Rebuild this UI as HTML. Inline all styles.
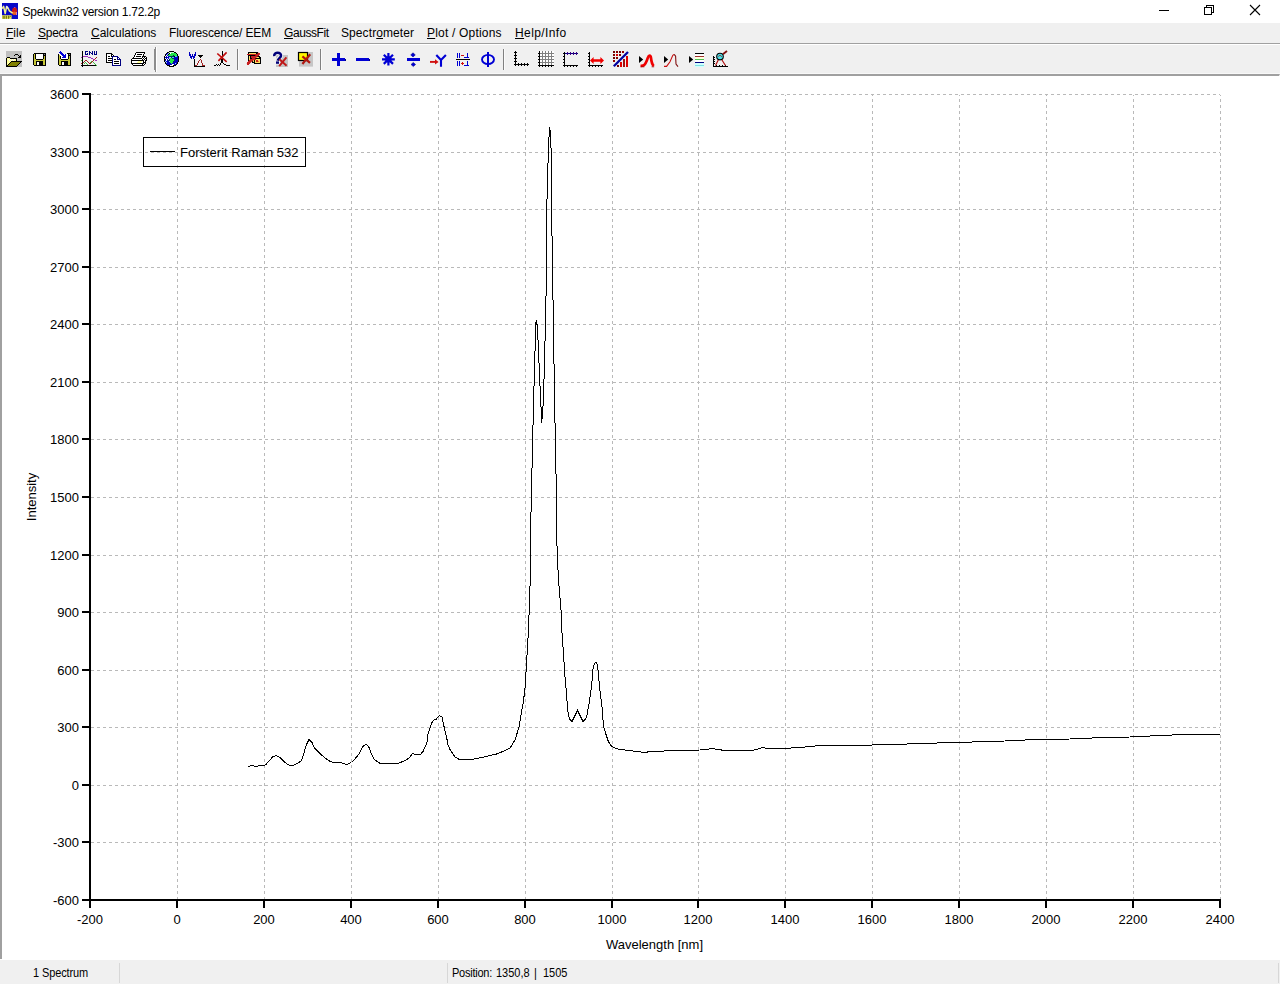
<!DOCTYPE html>
<html lang="en"><head><meta charset="utf-8"><title>Spekwin32 version 1.72.2p</title>
<style>
html,body{margin:0;padding:0;}
body{width:1280px;height:984px;overflow:hidden;background:#fff;position:relative;font-family:"Liberation Sans",Arial,sans-serif;color:#000;}
.titlebar{position:absolute;left:0;top:0;width:1280px;height:23px;background:#fff;}
.title{position:absolute;left:22.6px;top:5px;font-size:12px;line-height:15px;white-space:nowrap;letter-spacing:-0.27px;}
.menubar{position:absolute;left:0;top:23px;width:1280px;height:20px;background:#f0f0f0;}
.menubar span{position:absolute;top:3px;font-size:12px;line-height:15px;white-space:nowrap;}
.menubar u{text-decoration:underline;text-underline-offset:1px;}
.line1{position:absolute;left:0;top:43px;width:1280px;height:1px;background:#a0a0a0;}
.line2{position:absolute;left:0;top:44px;width:1280px;height:1px;background:#fff;}
.toolbar{position:absolute;left:0;top:45px;width:1280px;height:29px;background:#f0f0f0;box-sizing:border-box;border-bottom:1px solid #f8f8f8;}
.sep{position:absolute;top:6px;width:1px;height:20px;background:#a0a0a0;border-right:1px solid #fff;}
.ic{position:absolute;top:6px;width:16px;height:16px;}
.panel{position:absolute;left:0;top:74px;width:1280px;height:885px;background:#fff;border-top:2px solid #a0a0a0;border-left:2px solid #a0a0a0;border-right:1px solid #fff;box-sizing:border-box;}
.plot{position:absolute;left:0;top:75px;}
.status{position:absolute;left:0;top:960px;width:1280px;height:24px;background:#f0f0f0;font-size:11px;}
.status span{position:absolute;top:7px;line-height:13px;white-space:pre;transform:scaleY(1.09);transform-origin:0 10px;}
.status i{position:absolute;top:3px;width:1px;height:20px;background:#d7d7d7;}
.wc{position:absolute;top:0;}
</style></head><body>
<div class="titlebar">
<svg style="position:absolute;left:2px;top:3px" width="16" height="16" viewBox="0 0 16 16"><rect width="16" height="16" fill="#0808c8"/>
<rect x="0" y="12.2" width="9.6" height="3.8" fill="#e8e860"/><path d="M1.2 12.8v3M2.8 12.8v3M4.6 12.8v3M6.6 12.8v3" stroke="#606000" stroke-width="0.9"/><path d="M7.2 14.2l1.8-1.2" stroke="#707010" stroke-width="0.9"/>
<ellipse cx="12.6" cy="8.2" rx="2.6" ry="3.8" fill="#c81818"/><ellipse cx="12.4" cy="10.2" rx="2" ry="1.8" fill="#e86020"/><rect x="14" y="9" width="1" height="3" fill="#e080a0"/><rect x="12" y="4" width="1.4" height="1" fill="#c040a0"/>
<path d="M0.2 5.6L1.6 3.4 3.2 10.6 4.6 3.6 6 5.2 7.4 7.8 10.6 10.2" stroke="#f4f490" stroke-width="1.5" fill="none" stroke-linejoin="round"/>
<path d="M4.6 3.6L6 5.2" stroke="#e8e8ff" stroke-width="1.5"/></svg>
<div class="title">Spekwin32 version 1.72.2p</div>
<svg class="wc" style="left:1140px" width="140" height="23" viewBox="0 0 140 23" shape-rendering="crispEdges"><g stroke="#000" stroke-width="1" fill="none">
<line x1="19" y1="10.5" x2="29" y2="10.5"/>
<rect x="64.5" y="7.5" width="7" height="7"/><path d="M66.5 7.5v-2h7v7h-2"/>
</g><g stroke="#000" stroke-width="1.1" fill="none" shape-rendering="auto"><path d="M110 5l10 10M120 5l-10 10"/></g></svg>
</div>
<div class="menubar">
<span style="left:6px"><u>F</u>ile</span>
<span style="left:38px;letter-spacing:-0.25px"><u>S</u>pectra</span>
<span style="left:91px"><u>C</u>alculations</span>
<span style="left:169px;letter-spacing:-0.16px">Fluorescence/ EEM</span>
<span style="left:284px;letter-spacing:-0.43px"><u>G</u>aussFit</span>
<span style="left:341px;letter-spacing:0.09px">Spectr<u>o</u>meter</span>
<span style="left:427px;letter-spacing:0.19px"><u>P</u>lot / Options</span>
<span style="left:515px;letter-spacing:0.4px"><u>H</u>elp/Info</span>
</div>
<div class="line1"></div><div class="line2"></div>
<div class="toolbar">
<svg style="position:absolute;left:0;top:0" width="1280" height="29" viewBox="0 45 1280 29"><g shape-rendering="crispEdges"><rect x="154" y="49" width="1" height="21" fill="#8c8c8c"/><rect x="155" y="47" width="1" height="25" fill="#8c8c8c"/><rect x="156" y="47" width="1" height="25" fill="#ffffff"/><rect x="237" y="49" width="1" height="21" fill="#808080"/><rect x="238" y="49" width="1" height="21" fill="#fafafa"/><rect x="320" y="49" width="1" height="21" fill="#808080"/><rect x="321" y="49" width="1" height="21" fill="#fafafa"/><rect x="503" y="49" width="1" height="21" fill="#808080"/><rect x="504" y="49" width="1" height="21" fill="#fafafa"/></g><g shape-rendering="crispEdges"><rect x="6" y="51" width="16" height="1" fill="#c0c0c0"/><rect x="6" y="52" width="16" height="1" fill="#c0c0c0"/><rect x="6" y="53" width="16" height="1" fill="#c0c0c0"/><rect x="6" y="54" width="9" height="1" fill="#c0c0c0"/><rect x="15" y="54" width="3" height="1" fill="#000000"/><rect x="18" y="54" width="4" height="1" fill="#c0c0c0"/><rect x="6" y="55" width="8" height="1" fill="#c0c0c0"/><rect x="14" y="55" width="1" height="1" fill="#000000"/><rect x="15" y="55" width="3" height="1" fill="#c0c0c0"/><rect x="18" y="55" width="1" height="1" fill="#000000"/><rect x="19" y="55" width="1" height="1" fill="#c0c0c0"/><rect x="20" y="55" width="1" height="1" fill="#000000"/><rect x="21" y="55" width="1" height="1" fill="#c0c0c0"/><rect x="6" y="56" width="13" height="1" fill="#c0c0c0"/><rect x="19" y="56" width="2" height="1" fill="#000000"/><rect x="21" y="56" width="1" height="1" fill="#c0c0c0"/><rect x="6" y="57" width="1" height="1" fill="#c0c0c0"/><rect x="7" y="57" width="3" height="1" fill="#000000"/><rect x="10" y="57" width="8" height="1" fill="#c0c0c0"/><rect x="18" y="57" width="3" height="1" fill="#000000"/><rect x="21" y="57" width="1" height="1" fill="#c0c0c0"/><rect x="6" y="58" width="1" height="1" fill="#000000"/><rect x="7" y="58" width="3" height="1" fill="#ffff99"/><rect x="10" y="58" width="7" height="1" fill="#000000"/><rect x="17" y="58" width="5" height="1" fill="#c0c0c0"/><rect x="6" y="59" width="1" height="1" fill="#000000"/><rect x="7" y="59" width="1" height="1" fill="#ffff99"/><rect x="8" y="59" width="1" height="1" fill="#ffffff"/><rect x="9" y="59" width="1" height="1" fill="#ffff99"/><rect x="10" y="59" width="1" height="1" fill="#ffffff"/><rect x="11" y="59" width="1" height="1" fill="#ffff99"/><rect x="12" y="59" width="1" height="1" fill="#ffffff"/><rect x="13" y="59" width="1" height="1" fill="#ffff99"/><rect x="14" y="59" width="1" height="1" fill="#ffffff"/><rect x="15" y="59" width="1" height="1" fill="#ffff99"/><rect x="16" y="59" width="1" height="1" fill="#000000"/><rect x="17" y="59" width="5" height="1" fill="#c0c0c0"/><rect x="6" y="60" width="1" height="1" fill="#000000"/><rect x="7" y="60" width="2" height="1" fill="#ffff99"/><rect x="9" y="60" width="1" height="1" fill="#ffffff"/><rect x="10" y="60" width="1" height="1" fill="#ffff99"/><rect x="11" y="60" width="1" height="1" fill="#ffffff"/><rect x="12" y="60" width="1" height="1" fill="#ffff99"/><rect x="13" y="60" width="1" height="1" fill="#ffffff"/><rect x="14" y="60" width="2" height="1" fill="#ffff99"/><rect x="16" y="60" width="1" height="1" fill="#000000"/><rect x="17" y="60" width="5" height="1" fill="#c0c0c0"/><rect x="6" y="61" width="1" height="1" fill="#000000"/><rect x="7" y="61" width="4" height="1" fill="#ffff99"/><rect x="11" y="61" width="11" height="1" fill="#000000"/><rect x="6" y="62" width="1" height="1" fill="#000000"/><rect x="7" y="62" width="3" height="1" fill="#ffff99"/><rect x="10" y="62" width="1" height="1" fill="#000000"/><rect x="11" y="62" width="9" height="1" fill="#808000"/><rect x="20" y="62" width="1" height="1" fill="#000000"/><rect x="21" y="62" width="1" height="1" fill="#c0c0c0"/><rect x="6" y="63" width="1" height="1" fill="#000000"/><rect x="7" y="63" width="2" height="1" fill="#ffff99"/><rect x="9" y="63" width="1" height="1" fill="#000000"/><rect x="10" y="63" width="9" height="1" fill="#808000"/><rect x="19" y="63" width="1" height="1" fill="#000000"/><rect x="20" y="63" width="2" height="1" fill="#c0c0c0"/><rect x="6" y="64" width="1" height="1" fill="#000000"/><rect x="7" y="64" width="1" height="1" fill="#ffff99"/><rect x="8" y="64" width="1" height="1" fill="#000000"/><rect x="9" y="64" width="9" height="1" fill="#808000"/><rect x="18" y="64" width="1" height="1" fill="#000000"/><rect x="19" y="64" width="3" height="1" fill="#c0c0c0"/><rect x="6" y="65" width="2" height="1" fill="#000000"/><rect x="8" y="65" width="9" height="1" fill="#808000"/><rect x="17" y="65" width="1" height="1" fill="#000000"/><rect x="18" y="65" width="4" height="1" fill="#c0c0c0"/><rect x="6" y="66" width="11" height="1" fill="#000000"/><rect x="17" y="66" width="5" height="1" fill="#c0c0c0"/><rect x="34" y="53" width="12" height="1" fill="#000000"/><rect x="33" y="54" width="1" height="1" fill="#000000"/><rect x="34" y="54" width="1" height="1" fill="#c8c838"/><rect x="35" y="54" width="1" height="1" fill="#000000"/><rect x="36" y="54" width="7" height="1" fill="#ffffff"/><rect x="43" y="54" width="1" height="1" fill="#000000"/><rect x="44" y="54" width="1" height="1" fill="#808080"/><rect x="45" y="54" width="1" height="1" fill="#000000"/><rect x="33" y="55" width="1" height="1" fill="#000000"/><rect x="34" y="55" width="1" height="1" fill="#c8c838"/><rect x="35" y="55" width="1" height="1" fill="#000000"/><rect x="36" y="55" width="7" height="1" fill="#ffffff"/><rect x="43" y="55" width="3" height="1" fill="#000000"/><rect x="33" y="56" width="1" height="1" fill="#000000"/><rect x="34" y="56" width="1" height="1" fill="#c8c838"/><rect x="35" y="56" width="1" height="1" fill="#000000"/><rect x="36" y="56" width="7" height="1" fill="#ffffff"/><rect x="43" y="56" width="1" height="1" fill="#000000"/><rect x="44" y="56" width="1" height="1" fill="#c8c838"/><rect x="45" y="56" width="1" height="1" fill="#000000"/><rect x="33" y="57" width="1" height="1" fill="#000000"/><rect x="34" y="57" width="1" height="1" fill="#c8c838"/><rect x="35" y="57" width="1" height="1" fill="#000000"/><rect x="36" y="57" width="7" height="1" fill="#ffffff"/><rect x="43" y="57" width="1" height="1" fill="#000000"/><rect x="44" y="57" width="1" height="1" fill="#c8c838"/><rect x="45" y="57" width="1" height="1" fill="#000000"/><rect x="33" y="58" width="1" height="1" fill="#000000"/><rect x="34" y="58" width="1" height="1" fill="#c8c838"/><rect x="35" y="58" width="1" height="1" fill="#000000"/><rect x="36" y="58" width="7" height="1" fill="#ffffff"/><rect x="43" y="58" width="1" height="1" fill="#000000"/><rect x="44" y="58" width="1" height="1" fill="#c8c838"/><rect x="45" y="58" width="1" height="1" fill="#000000"/><rect x="33" y="59" width="1" height="1" fill="#000000"/><rect x="34" y="59" width="2" height="1" fill="#c8c838"/><rect x="36" y="59" width="7" height="1" fill="#000000"/><rect x="43" y="59" width="2" height="1" fill="#c8c838"/><rect x="45" y="59" width="1" height="1" fill="#000000"/><rect x="33" y="60" width="1" height="1" fill="#000000"/><rect x="34" y="60" width="11" height="1" fill="#c8c838"/><rect x="45" y="60" width="1" height="1" fill="#000000"/><rect x="33" y="61" width="1" height="1" fill="#000000"/><rect x="34" y="61" width="2" height="1" fill="#c8c838"/><rect x="36" y="61" width="7" height="1" fill="#000000"/><rect x="43" y="61" width="2" height="1" fill="#c8c838"/><rect x="45" y="61" width="1" height="1" fill="#000000"/><rect x="33" y="62" width="1" height="1" fill="#000000"/><rect x="34" y="62" width="2" height="1" fill="#c8c838"/><rect x="36" y="62" width="1" height="1" fill="#000000"/><rect x="37" y="62" width="2" height="1" fill="#ffffff"/><rect x="39" y="62" width="4" height="1" fill="#000000"/><rect x="43" y="62" width="2" height="1" fill="#c8c838"/><rect x="45" y="62" width="1" height="1" fill="#000000"/><rect x="33" y="63" width="1" height="1" fill="#000000"/><rect x="34" y="63" width="2" height="1" fill="#c8c838"/><rect x="36" y="63" width="1" height="1" fill="#000000"/><rect x="37" y="63" width="2" height="1" fill="#ffffff"/><rect x="39" y="63" width="4" height="1" fill="#000000"/><rect x="43" y="63" width="2" height="1" fill="#c8c838"/><rect x="45" y="63" width="1" height="1" fill="#000000"/><rect x="33" y="64" width="1" height="1" fill="#000000"/><rect x="34" y="64" width="2" height="1" fill="#c8c838"/><rect x="36" y="64" width="1" height="1" fill="#000000"/><rect x="37" y="64" width="2" height="1" fill="#ffffff"/><rect x="39" y="64" width="4" height="1" fill="#000000"/><rect x="43" y="64" width="2" height="1" fill="#c8c838"/><rect x="45" y="64" width="1" height="1" fill="#000000"/><rect x="34" y="65" width="12" height="1" fill="#000000"/><rect x="60" y="51" width="1" height="1" fill="#0000d8"/><rect x="59" y="52" width="3" height="1" fill="#0000d8"/><rect x="60" y="53" width="3" height="1" fill="#0000d8"/><rect x="67" y="53" width="4" height="1" fill="#000000"/><rect x="58" y="54" width="1" height="1" fill="#000000"/><rect x="61" y="54" width="3" height="1" fill="#0000d8"/><rect x="64" y="54" width="1" height="1" fill="#ffffff"/><rect x="65" y="54" width="1" height="1" fill="#0000d8"/><rect x="66" y="54" width="2" height="1" fill="#ffffff"/><rect x="68" y="54" width="1" height="1" fill="#000000"/><rect x="69" y="54" width="1" height="1" fill="#808080"/><rect x="70" y="54" width="1" height="1" fill="#000000"/><rect x="58" y="55" width="1" height="1" fill="#000000"/><rect x="59" y="55" width="1" height="1" fill="#c8c838"/><rect x="60" y="55" width="2" height="1" fill="#ffffff"/><rect x="62" y="55" width="4" height="1" fill="#0000d8"/><rect x="66" y="55" width="2" height="1" fill="#ffffff"/><rect x="68" y="55" width="3" height="1" fill="#000000"/><rect x="58" y="56" width="1" height="1" fill="#000000"/><rect x="59" y="56" width="1" height="1" fill="#c8c838"/><rect x="60" y="56" width="1" height="1" fill="#000000"/><rect x="61" y="56" width="2" height="1" fill="#ffffff"/><rect x="63" y="56" width="3" height="1" fill="#0000d8"/><rect x="66" y="56" width="2" height="1" fill="#ffffff"/><rect x="68" y="56" width="1" height="1" fill="#000000"/><rect x="69" y="56" width="1" height="1" fill="#c8c838"/><rect x="70" y="56" width="1" height="1" fill="#000000"/><rect x="58" y="57" width="1" height="1" fill="#000000"/><rect x="59" y="57" width="1" height="1" fill="#c8c838"/><rect x="60" y="57" width="1" height="1" fill="#000000"/><rect x="61" y="57" width="1" height="1" fill="#ffffff"/><rect x="62" y="57" width="4" height="1" fill="#0000d8"/><rect x="66" y="57" width="2" height="1" fill="#ffffff"/><rect x="68" y="57" width="1" height="1" fill="#000000"/><rect x="69" y="57" width="1" height="1" fill="#c8c838"/><rect x="70" y="57" width="1" height="1" fill="#000000"/><rect x="58" y="58" width="1" height="1" fill="#000000"/><rect x="59" y="58" width="1" height="1" fill="#c8c838"/><rect x="60" y="58" width="1" height="1" fill="#000000"/><rect x="61" y="58" width="7" height="1" fill="#ffffff"/><rect x="68" y="58" width="1" height="1" fill="#000000"/><rect x="69" y="58" width="1" height="1" fill="#c8c838"/><rect x="70" y="58" width="1" height="1" fill="#000000"/><rect x="58" y="59" width="1" height="1" fill="#000000"/><rect x="59" y="59" width="2" height="1" fill="#c8c838"/><rect x="61" y="59" width="7" height="1" fill="#000000"/><rect x="68" y="59" width="2" height="1" fill="#c8c838"/><rect x="70" y="59" width="1" height="1" fill="#000000"/><rect x="58" y="60" width="1" height="1" fill="#000000"/><rect x="59" y="60" width="11" height="1" fill="#c8c838"/><rect x="70" y="60" width="1" height="1" fill="#000000"/><rect x="58" y="61" width="1" height="1" fill="#000000"/><rect x="59" y="61" width="2" height="1" fill="#c8c838"/><rect x="61" y="61" width="7" height="1" fill="#000000"/><rect x="68" y="61" width="2" height="1" fill="#c8c838"/><rect x="70" y="61" width="1" height="1" fill="#000000"/><rect x="58" y="62" width="1" height="1" fill="#000000"/><rect x="59" y="62" width="2" height="1" fill="#c8c838"/><rect x="61" y="62" width="1" height="1" fill="#000000"/><rect x="62" y="62" width="2" height="1" fill="#ffffff"/><rect x="64" y="62" width="4" height="1" fill="#000000"/><rect x="68" y="62" width="2" height="1" fill="#c8c838"/><rect x="70" y="62" width="1" height="1" fill="#000000"/><rect x="58" y="63" width="1" height="1" fill="#000000"/><rect x="59" y="63" width="2" height="1" fill="#c8c838"/><rect x="61" y="63" width="1" height="1" fill="#000000"/><rect x="62" y="63" width="2" height="1" fill="#ffffff"/><rect x="64" y="63" width="4" height="1" fill="#000000"/><rect x="68" y="63" width="2" height="1" fill="#c8c838"/><rect x="70" y="63" width="1" height="1" fill="#000000"/><rect x="58" y="64" width="1" height="1" fill="#000000"/><rect x="59" y="64" width="2" height="1" fill="#c8c838"/><rect x="61" y="64" width="1" height="1" fill="#000000"/><rect x="62" y="64" width="2" height="1" fill="#ffffff"/><rect x="64" y="64" width="4" height="1" fill="#000000"/><rect x="68" y="64" width="2" height="1" fill="#c8c838"/><rect x="70" y="64" width="1" height="1" fill="#000000"/><rect x="59" y="65" width="12" height="1" fill="#000000"/><rect x="82" y="51" width="1" height="1" fill="#000000"/><rect x="85" y="51" width="3" height="1" fill="#000080"/><rect x="89" y="51" width="1" height="1" fill="#000080"/><rect x="92" y="51" width="1" height="1" fill="#000080"/><rect x="94" y="51" width="1" height="1" fill="#000080"/><rect x="96" y="51" width="1" height="1" fill="#000080"/><rect x="82" y="52" width="1" height="1" fill="#000000"/><rect x="85" y="52" width="1" height="1" fill="#000080"/><rect x="89" y="52" width="2" height="1" fill="#000080"/><rect x="92" y="52" width="1" height="1" fill="#000080"/><rect x="94" y="52" width="1" height="1" fill="#000080"/><rect x="96" y="52" width="1" height="1" fill="#000080"/><rect x="82" y="53" width="1" height="1" fill="#000000"/><rect x="85" y="53" width="1" height="1" fill="#000080"/><rect x="87" y="53" width="1" height="1" fill="#000080"/><rect x="89" y="53" width="1" height="1" fill="#000080"/><rect x="91" y="53" width="2" height="1" fill="#000080"/><rect x="94" y="53" width="1" height="1" fill="#000080"/><rect x="96" y="53" width="1" height="1" fill="#000080"/><rect x="82" y="54" width="1" height="1" fill="#000000"/><rect x="85" y="54" width="3" height="1" fill="#000080"/><rect x="89" y="54" width="1" height="1" fill="#000080"/><rect x="92" y="54" width="1" height="1" fill="#000080"/><rect x="94" y="54" width="3" height="1" fill="#000080"/><rect x="82" y="55" width="1" height="1" fill="#000000"/><rect x="82" y="56" width="1" height="1" fill="#000000"/><rect x="83" y="56" width="5" height="1" fill="#a030c0"/><rect x="81" y="57" width="1" height="1" fill="#a030c0"/><rect x="82" y="57" width="1" height="1" fill="#000000"/><rect x="88" y="57" width="3" height="1" fill="#a030c0"/><rect x="96" y="57" width="1" height="1" fill="#a02020"/><rect x="82" y="58" width="1" height="1" fill="#000000"/><rect x="91" y="58" width="2" height="1" fill="#a030c0"/><rect x="95" y="58" width="1" height="1" fill="#a02020"/><rect x="82" y="59" width="1" height="1" fill="#000000"/><rect x="93" y="59" width="1" height="1" fill="#a030c0"/><rect x="94" y="59" width="1" height="1" fill="#d02060"/><rect x="81" y="60" width="1" height="1" fill="#40c040"/><rect x="82" y="60" width="1" height="1" fill="#000000"/><rect x="85" y="60" width="2" height="1" fill="#a02020"/><rect x="93" y="60" width="1" height="1" fill="#a02020"/><rect x="95" y="60" width="2" height="1" fill="#a030c0"/><rect x="82" y="61" width="1" height="1" fill="#000000"/><rect x="84" y="61" width="1" height="1" fill="#a02020"/><rect x="87" y="61" width="1" height="1" fill="#a02020"/><rect x="91" y="61" width="1" height="1" fill="#40c040"/><rect x="92" y="61" width="1" height="1" fill="#a02020"/><rect x="82" y="62" width="1" height="1" fill="#000000"/><rect x="83" y="62" width="1" height="1" fill="#a02020"/><rect x="85" y="62" width="1" height="1" fill="#40c040"/><rect x="88" y="62" width="1" height="1" fill="#a02020"/><rect x="90" y="62" width="1" height="1" fill="#40c040"/><rect x="91" y="62" width="1" height="1" fill="#a02020"/><rect x="93" y="62" width="1" height="1" fill="#40c040"/><rect x="81" y="63" width="1" height="1" fill="#a02020"/><rect x="82" y="63" width="1" height="1" fill="#000000"/><rect x="84" y="63" width="1" height="1" fill="#40c040"/><rect x="86" y="63" width="1" height="1" fill="#40c040"/><rect x="89" y="63" width="2" height="1" fill="#a02020"/><rect x="94" y="63" width="1" height="1" fill="#40c040"/><rect x="82" y="64" width="1" height="1" fill="#000000"/><rect x="87" y="64" width="1" height="1" fill="#40c040"/><rect x="95" y="64" width="1" height="1" fill="#40c040"/><rect x="81" y="65" width="15" height="1" fill="#000000"/><rect x="96" y="65" width="1" height="1" fill="#40c040"/><rect x="82" y="66" width="1" height="1" fill="#000000"/><rect x="106" y="53" width="6" height="1" fill="#000000"/><rect x="106" y="54" width="1" height="1" fill="#000000"/><rect x="107" y="54" width="4" height="1" fill="#ffffff"/><rect x="111" y="54" width="2" height="1" fill="#000000"/><rect x="106" y="55" width="1" height="1" fill="#000000"/><rect x="107" y="55" width="4" height="1" fill="#ffffff"/><rect x="111" y="55" width="1" height="1" fill="#000000"/><rect x="112" y="55" width="1" height="1" fill="#ffffff"/><rect x="113" y="55" width="1" height="1" fill="#000000"/><rect x="106" y="56" width="1" height="1" fill="#000000"/><rect x="107" y="56" width="1" height="1" fill="#ffffff"/><rect x="108" y="56" width="2" height="1" fill="#000000"/><rect x="110" y="56" width="1" height="1" fill="#ffffff"/><rect x="111" y="56" width="1" height="1" fill="#000000"/><rect x="112" y="56" width="6" height="1" fill="#000080"/><rect x="106" y="57" width="1" height="1" fill="#000000"/><rect x="107" y="57" width="5" height="1" fill="#ffffff"/><rect x="112" y="57" width="1" height="1" fill="#000080"/><rect x="113" y="57" width="4" height="1" fill="#ffffff"/><rect x="117" y="57" width="2" height="1" fill="#000080"/><rect x="106" y="58" width="1" height="1" fill="#000000"/><rect x="107" y="58" width="1" height="1" fill="#ffffff"/><rect x="108" y="58" width="4" height="1" fill="#000000"/><rect x="112" y="58" width="1" height="1" fill="#000080"/><rect x="113" y="58" width="4" height="1" fill="#ffffff"/><rect x="117" y="58" width="1" height="1" fill="#000080"/><rect x="118" y="58" width="1" height="1" fill="#ffffff"/><rect x="119" y="58" width="1" height="1" fill="#000080"/><rect x="106" y="59" width="1" height="1" fill="#000000"/><rect x="107" y="59" width="5" height="1" fill="#ffffff"/><rect x="112" y="59" width="1" height="1" fill="#000080"/><rect x="113" y="59" width="1" height="1" fill="#ffffff"/><rect x="114" y="59" width="2" height="1" fill="#000000"/><rect x="116" y="59" width="1" height="1" fill="#ffffff"/><rect x="117" y="59" width="4" height="1" fill="#000080"/><rect x="106" y="60" width="1" height="1" fill="#000000"/><rect x="107" y="60" width="1" height="1" fill="#ffffff"/><rect x="108" y="60" width="4" height="1" fill="#000000"/><rect x="112" y="60" width="1" height="1" fill="#000080"/><rect x="113" y="60" width="7" height="1" fill="#ffffff"/><rect x="120" y="60" width="1" height="1" fill="#000080"/><rect x="106" y="61" width="1" height="1" fill="#000000"/><rect x="107" y="61" width="5" height="1" fill="#ffffff"/><rect x="112" y="61" width="1" height="1" fill="#000080"/><rect x="113" y="61" width="1" height="1" fill="#ffffff"/><rect x="114" y="61" width="5" height="1" fill="#000000"/><rect x="119" y="61" width="1" height="1" fill="#ffffff"/><rect x="120" y="61" width="1" height="1" fill="#000080"/><rect x="106" y="62" width="6" height="1" fill="#000000"/><rect x="112" y="62" width="1" height="1" fill="#000080"/><rect x="113" y="62" width="7" height="1" fill="#ffffff"/><rect x="120" y="62" width="1" height="1" fill="#000080"/><rect x="112" y="63" width="1" height="1" fill="#000080"/><rect x="113" y="63" width="1" height="1" fill="#ffffff"/><rect x="114" y="63" width="5" height="1" fill="#000000"/><rect x="119" y="63" width="1" height="1" fill="#ffffff"/><rect x="120" y="63" width="1" height="1" fill="#000080"/><rect x="112" y="64" width="1" height="1" fill="#000080"/><rect x="113" y="64" width="7" height="1" fill="#ffffff"/><rect x="120" y="64" width="1" height="1" fill="#000080"/><rect x="112" y="65" width="9" height="1" fill="#000080"/><rect x="136" y="52" width="9" height="1" fill="#000000"/><rect x="135" y="53" width="1" height="1" fill="#000000"/><rect x="136" y="53" width="8" height="1" fill="#ffffff"/><rect x="144" y="53" width="1" height="1" fill="#000000"/><rect x="135" y="54" width="1" height="1" fill="#000000"/><rect x="136" y="54" width="1" height="1" fill="#ffffff"/><rect x="137" y="54" width="5" height="1" fill="#000000"/><rect x="142" y="54" width="1" height="1" fill="#ffffff"/><rect x="143" y="54" width="1" height="1" fill="#000000"/><rect x="134" y="55" width="1" height="1" fill="#000000"/><rect x="135" y="55" width="8" height="1" fill="#ffffff"/><rect x="143" y="55" width="1" height="1" fill="#000000"/><rect x="134" y="56" width="1" height="1" fill="#000000"/><rect x="135" y="56" width="1" height="1" fill="#ffffff"/><rect x="136" y="56" width="5" height="1" fill="#000000"/><rect x="141" y="56" width="1" height="1" fill="#ffffff"/><rect x="142" y="56" width="4" height="1" fill="#000000"/><rect x="133" y="57" width="1" height="1" fill="#000000"/><rect x="134" y="57" width="8" height="1" fill="#ffffff"/><rect x="142" y="57" width="1" height="1" fill="#000000"/><rect x="143" y="57" width="1" height="1" fill="#ffffff"/><rect x="144" y="57" width="1" height="1" fill="#000000"/><rect x="145" y="57" width="1" height="1" fill="#ffffff"/><rect x="146" y="57" width="1" height="1" fill="#000000"/><rect x="132" y="58" width="10" height="1" fill="#000000"/><rect x="142" y="58" width="1" height="1" fill="#ffffff"/><rect x="143" y="58" width="1" height="1" fill="#000000"/><rect x="144" y="58" width="1" height="1" fill="#ffffff"/><rect x="145" y="58" width="2" height="1" fill="#000000"/><rect x="131" y="59" width="1" height="1" fill="#000000"/><rect x="132" y="59" width="10" height="1" fill="#ffffff"/><rect x="142" y="59" width="1" height="1" fill="#000000"/><rect x="143" y="59" width="1" height="1" fill="#ffffff"/><rect x="144" y="59" width="1" height="1" fill="#000000"/><rect x="145" y="59" width="1" height="1" fill="#ffffff"/><rect x="146" y="59" width="1" height="1" fill="#000000"/><rect x="131" y="60" width="13" height="1" fill="#000000"/><rect x="144" y="60" width="1" height="1" fill="#ffffff"/><rect x="145" y="60" width="2" height="1" fill="#000000"/><rect x="131" y="61" width="1" height="1" fill="#000000"/><rect x="132" y="61" width="6" height="1" fill="#ffffff"/><rect x="138" y="61" width="4" height="1" fill="#ffff99"/><rect x="142" y="61" width="1" height="1" fill="#ffffff"/><rect x="143" y="61" width="1" height="1" fill="#000000"/><rect x="144" y="61" width="1" height="1" fill="#ffffff"/><rect x="145" y="61" width="1" height="1" fill="#000000"/><rect x="131" y="62" width="1" height="1" fill="#000000"/><rect x="132" y="62" width="5" height="1" fill="#ffffff"/><rect x="137" y="62" width="4" height="1" fill="#ffff99"/><rect x="141" y="62" width="2" height="1" fill="#ffffff"/><rect x="143" y="62" width="3" height="1" fill="#000000"/><rect x="131" y="63" width="13" height="1" fill="#000000"/><rect x="144" y="63" width="1" height="1" fill="#ffffff"/><rect x="145" y="63" width="1" height="1" fill="#000000"/><rect x="132" y="64" width="1" height="1" fill="#000000"/><rect x="133" y="64" width="9" height="1" fill="#ffffff"/><rect x="142" y="64" width="1" height="1" fill="#000000"/><rect x="143" y="64" width="1" height="1" fill="#ffffff"/><rect x="144" y="64" width="1" height="1" fill="#000000"/><rect x="133" y="65" width="11" height="1" fill="#000000"/><rect x="189" y="52" width="1" height="1" fill="#0000c0"/><rect x="195" y="52" width="1" height="1" fill="#0000c0"/><rect x="189" y="53" width="1" height="1" fill="#0000c0"/><rect x="195" y="53" width="1" height="1" fill="#0000c0"/><rect x="189" y="54" width="2" height="1" fill="#0000c0"/><rect x="192" y="54" width="1" height="1" fill="#0000c0"/><rect x="194" y="54" width="2" height="1" fill="#0000c0"/><rect x="189" y="55" width="2" height="1" fill="#0000c0"/><rect x="192" y="55" width="1" height="1" fill="#0000c0"/><rect x="194" y="55" width="2" height="1" fill="#0000c0"/><rect x="198" y="55" width="5" height="1" fill="#000000"/><rect x="190" y="56" width="5" height="1" fill="#0000c0"/><rect x="199" y="56" width="3" height="1" fill="#000000"/><rect x="190" y="57" width="2" height="1" fill="#0000c0"/><rect x="193" y="57" width="2" height="1" fill="#0000c0"/><rect x="200" y="57" width="1" height="1" fill="#000000"/><rect x="191" y="58" width="1" height="1" fill="#0000c0"/><rect x="193" y="58" width="1" height="1" fill="#0000c0"/><rect x="194" y="59" width="1" height="1" fill="#000000"/><rect x="200" y="59" width="1" height="1" fill="#a02020"/><rect x="194" y="60" width="1" height="1" fill="#000000"/><rect x="199" y="60" width="1" height="1" fill="#a02020"/><rect x="201" y="60" width="1" height="1" fill="#a02020"/><rect x="194" y="61" width="1" height="1" fill="#000000"/><rect x="198" y="61" width="1" height="1" fill="#a02020"/><rect x="201" y="61" width="1" height="1" fill="#a02020"/><rect x="194" y="62" width="1" height="1" fill="#000000"/><rect x="198" y="62" width="1" height="1" fill="#a02020"/><rect x="201" y="62" width="1" height="1" fill="#a02020"/><rect x="194" y="63" width="1" height="1" fill="#000000"/><rect x="197" y="63" width="1" height="1" fill="#a02020"/><rect x="202" y="63" width="1" height="1" fill="#a02020"/><rect x="194" y="64" width="1" height="1" fill="#000000"/><rect x="197" y="64" width="1" height="1" fill="#a02020"/><rect x="202" y="64" width="1" height="1" fill="#a02020"/><rect x="194" y="65" width="1" height="1" fill="#000000"/><rect x="195" y="65" width="2" height="1" fill="#a02020"/><rect x="202" y="65" width="2" height="1" fill="#a02020"/><rect x="194" y="66" width="10" height="1" fill="#000000"/><rect x="204" y="66" width="1" height="1" fill="#000"/><rect x="204" y="65" width="1" height="1" fill="#a02020"/><rect x="169" y="51" width="5" height="1" fill="#000000"/><rect x="167" y="52" width="2" height="1" fill="#000000"/><rect x="169" y="52" width="5" height="1" fill="#c8ffd8"/><rect x="174" y="52" width="2" height="1" fill="#000000"/><rect x="166" y="53" width="1" height="1" fill="#000000"/><rect x="167" y="53" width="1" height="1" fill="#0000c0"/><rect x="168" y="53" width="1" height="1" fill="#99ccff"/><rect x="169" y="53" width="1" height="1" fill="#000000"/><rect x="170" y="53" width="1" height="1" fill="#ffffff"/><rect x="171" y="53" width="5" height="1" fill="#20e848"/><rect x="176" y="53" width="1" height="1" fill="#000000"/><rect x="165" y="54" width="1" height="1" fill="#000000"/><rect x="166" y="54" width="1" height="1" fill="#0000c0"/><rect x="167" y="54" width="1" height="1" fill="#99ccff"/><rect x="168" y="54" width="1" height="1" fill="#000000"/><rect x="169" y="54" width="8" height="1" fill="#20e848"/><rect x="177" y="54" width="1" height="1" fill="#000000"/><rect x="165" y="55" width="1" height="1" fill="#000000"/><rect x="166" y="55" width="1" height="1" fill="#ffffff"/><rect x="167" y="55" width="1" height="1" fill="#0000c0"/><rect x="168" y="55" width="5" height="1" fill="#20e848"/><rect x="173" y="55" width="1" height="1" fill="#003858"/><rect x="174" y="55" width="3" height="1" fill="#20e848"/><rect x="177" y="55" width="1" height="1" fill="#000000"/><rect x="164" y="56" width="1" height="1" fill="#000000"/><rect x="165" y="56" width="1" height="1" fill="#ffffff"/><rect x="166" y="56" width="1" height="1" fill="#0000c0"/><rect x="167" y="56" width="1" height="1" fill="#ffffff"/><rect x="168" y="56" width="2" height="1" fill="#0000c0"/><rect x="170" y="56" width="4" height="1" fill="#003858"/><rect x="174" y="56" width="1" height="1" fill="#000000"/><rect x="175" y="56" width="2" height="1" fill="#40e0e8"/><rect x="177" y="56" width="1" height="1" fill="#0000c0"/><rect x="178" y="56" width="1" height="1" fill="#000000"/><rect x="164" y="57" width="1" height="1" fill="#000000"/><rect x="165" y="57" width="4" height="1" fill="#0000c0"/><rect x="169" y="57" width="2" height="1" fill="#99ccff"/><rect x="171" y="57" width="1" height="1" fill="#003858"/><rect x="172" y="57" width="2" height="1" fill="#40e0e8"/><rect x="174" y="57" width="4" height="1" fill="#0000c0"/><rect x="178" y="57" width="1" height="1" fill="#000000"/><rect x="164" y="58" width="1" height="1" fill="#000000"/><rect x="165" y="58" width="1" height="1" fill="#ffffff"/><rect x="166" y="58" width="1" height="1" fill="#0000c0"/><rect x="167" y="58" width="1" height="1" fill="#ffffff"/><rect x="168" y="58" width="1" height="1" fill="#0000c0"/><rect x="169" y="58" width="1" height="1" fill="#99ccff"/><rect x="170" y="58" width="2" height="1" fill="#20e848"/><rect x="172" y="58" width="2" height="1" fill="#003858"/><rect x="174" y="58" width="4" height="1" fill="#0000c0"/><rect x="178" y="58" width="1" height="1" fill="#000000"/><rect x="164" y="59" width="2" height="1" fill="#000000"/><rect x="166" y="59" width="1" height="1" fill="#ffffff"/><rect x="167" y="59" width="1" height="1" fill="#0000c0"/><rect x="168" y="59" width="1" height="1" fill="#ffffff"/><rect x="169" y="59" width="1" height="1" fill="#003858"/><rect x="170" y="59" width="4" height="1" fill="#20e848"/><rect x="174" y="59" width="4" height="1" fill="#0000c0"/><rect x="178" y="59" width="1" height="1" fill="#000000"/><rect x="164" y="60" width="1" height="1" fill="#000000"/><rect x="165" y="60" width="1" height="1" fill="#0000c0"/><rect x="166" y="60" width="1" height="1" fill="#ffffff"/><rect x="167" y="60" width="1" height="1" fill="#0000c0"/><rect x="168" y="60" width="2" height="1" fill="#003858"/><rect x="170" y="60" width="4" height="1" fill="#20e848"/><rect x="174" y="60" width="1" height="1" fill="#003858"/><rect x="175" y="60" width="3" height="1" fill="#0000c0"/><rect x="178" y="60" width="1" height="1" fill="#000000"/><rect x="164" y="61" width="1" height="1" fill="#000000"/><rect x="165" y="61" width="1" height="1" fill="#99ccff"/><rect x="166" y="61" width="3" height="1" fill="#0000c0"/><rect x="169" y="61" width="1" height="1" fill="#99ccff"/><rect x="170" y="61" width="3" height="1" fill="#20e848"/><rect x="173" y="61" width="1" height="1" fill="#003858"/><rect x="174" y="61" width="4" height="1" fill="#0000c0"/><rect x="178" y="61" width="1" height="1" fill="#000000"/><rect x="165" y="62" width="1" height="1" fill="#000000"/><rect x="166" y="62" width="1" height="1" fill="#99ccff"/><rect x="167" y="62" width="3" height="1" fill="#0000c0"/><rect x="170" y="62" width="3" height="1" fill="#20e848"/><rect x="173" y="62" width="4" height="1" fill="#0000c0"/><rect x="177" y="62" width="1" height="1" fill="#000000"/><rect x="165" y="63" width="1" height="1" fill="#000000"/><rect x="166" y="63" width="5" height="1" fill="#0000c0"/><rect x="171" y="63" width="1" height="1" fill="#20e848"/><rect x="172" y="63" width="3" height="1" fill="#0000c0"/><rect x="175" y="63" width="1" height="1" fill="#99ccff"/><rect x="176" y="63" width="1" height="1" fill="#0000c0"/><rect x="177" y="63" width="1" height="1" fill="#000000"/><rect x="166" y="64" width="1" height="1" fill="#000000"/><rect x="167" y="64" width="5" height="1" fill="#0000c0"/><rect x="172" y="64" width="2" height="1" fill="#ffffff"/><rect x="174" y="64" width="2" height="1" fill="#0000c0"/><rect x="176" y="64" width="1" height="1" fill="#000000"/><rect x="167" y="65" width="3" height="1" fill="#000000"/><rect x="170" y="65" width="3" height="1" fill="#ffffff"/><rect x="173" y="65" width="3" height="1" fill="#000000"/><rect x="169" y="66" width="5" height="1" fill="#000000"/><rect x="248" y="52" width="10" height="1" fill="#000000"/><rect x="248" y="53" width="1" height="1" fill="#000000"/><rect x="249" y="53" width="7" height="1" fill="#ffe060"/><rect x="256" y="53" width="2" height="1" fill="#000000"/><rect x="258" y="53" width="2" height="1" fill="#c82020"/><rect x="247" y="54" width="12" height="1" fill="#c82020"/><rect x="248" y="55" width="8" height="1" fill="#000000"/><rect x="256" y="55" width="1" height="1" fill="#c82020"/><rect x="257" y="55" width="1" height="1" fill="#ffe060"/><rect x="258" y="55" width="1" height="1" fill="#000000"/><rect x="248" y="56" width="1" height="1" fill="#000000"/><rect x="249" y="56" width="1" height="1" fill="#ffe060"/><rect x="250" y="56" width="1" height="1" fill="#000000"/><rect x="251" y="56" width="4" height="1" fill="#c82020"/><rect x="255" y="56" width="5" height="1" fill="#000000"/><rect x="248" y="57" width="1" height="1" fill="#000000"/><rect x="249" y="57" width="1" height="1" fill="#ffe060"/><rect x="250" y="57" width="1" height="1" fill="#000000"/><rect x="251" y="57" width="4" height="1" fill="#c82020"/><rect x="255" y="57" width="4" height="1" fill="#ffe060"/><rect x="259" y="57" width="2" height="1" fill="#000000"/><rect x="248" y="58" width="1" height="1" fill="#000000"/><rect x="249" y="58" width="1" height="1" fill="#ffe060"/><rect x="250" y="58" width="2" height="1" fill="#000000"/><rect x="252" y="58" width="3" height="1" fill="#c82020"/><rect x="255" y="58" width="6" height="1" fill="#000000"/><rect x="248" y="59" width="1" height="1" fill="#000000"/><rect x="249" y="59" width="1" height="1" fill="#ffe060"/><rect x="250" y="59" width="2" height="1" fill="#c82020"/><rect x="252" y="59" width="1" height="1" fill="#000000"/><rect x="253" y="59" width="1" height="1" fill="#ffe060"/><rect x="254" y="59" width="2" height="1" fill="#c82020"/><rect x="256" y="59" width="4" height="1" fill="#ffe060"/><rect x="260" y="59" width="1" height="1" fill="#000000"/><rect x="248" y="60" width="1" height="1" fill="#000000"/><rect x="249" y="60" width="3" height="1" fill="#c82020"/><rect x="252" y="60" width="1" height="1" fill="#000000"/><rect x="253" y="60" width="1" height="1" fill="#ffe060"/><rect x="254" y="60" width="1" height="1" fill="#000000"/><rect x="255" y="60" width="1" height="1" fill="#ffe060"/><rect x="256" y="60" width="2" height="1" fill="#c82020"/><rect x="258" y="60" width="2" height="1" fill="#ffe060"/><rect x="260" y="60" width="1" height="1" fill="#000000"/><rect x="248" y="61" width="3" height="1" fill="#c82020"/><rect x="252" y="61" width="1" height="1" fill="#000000"/><rect x="253" y="61" width="1" height="1" fill="#ffe060"/><rect x="254" y="61" width="1" height="1" fill="#000000"/><rect x="255" y="61" width="1" height="1" fill="#ffe060"/><rect x="256" y="61" width="2" height="1" fill="#c82020"/><rect x="258" y="61" width="1" height="1" fill="#f07020"/><rect x="259" y="61" width="1" height="1" fill="#ffe060"/><rect x="260" y="61" width="1" height="1" fill="#000000"/><rect x="247" y="62" width="3" height="1" fill="#c82020"/><rect x="252" y="62" width="3" height="1" fill="#000000"/><rect x="255" y="62" width="5" height="1" fill="#ffe060"/><rect x="260" y="62" width="1" height="1" fill="#000000"/><rect x="247" y="63" width="3" height="1" fill="#c82020"/><rect x="254" y="63" width="7" height="1" fill="#000000"/><rect x="247" y="64" width="2" height="1" fill="#c82020"/></g><g transform="translate(213,51)"><g shape-rendering="crispEdges" fill="#000"><rect x="9" y="0" width="1" height="8"/><rect x="8" y="8" width="2" height="4"/><rect x="10" y="12" width="1" height="1"/><rect x="11" y="13" width="2" height="1"/><rect x="13" y="14" width="4" height="1"/>
<rect x="1" y="14" width="2" height="1"/><rect x="3" y="13" width="1" height="1"/><rect x="4" y="14" width="1" height="1"/><rect x="5" y="13" width="1" height="1"/><rect x="6" y="14" width="1" height="1"/><rect x="7" y="12" width="1" height="2"/></g>
<path d="M4.3 2.5L13.7 10.8M13.6 1.4L5.4 9.9" stroke="#c00c0c" stroke-width="1.6" fill="none"/></g><path d="M259.4 53.4L247.4 64.2" stroke="#c82020" stroke-width="2.3" fill="none"/><g transform="translate(271,51)"><rect x="5" y="4" width="12" height="12" fill="#c4c4c4"/>
<path d="M3.2 5.2C3 2.6 5 1.8 6.6 1.8C9 1.8 10.2 3.2 10 4.8C9.8 6.6 7.2 7.4 6.6 9.6" stroke="#f4f4f8" stroke-width="4.2" fill="none"/><rect x="4" y="9.6" width="5" height="4" fill="#f0f0f4"/>
<path d="M3.2 5.2C3 2.6 5 1.8 6.6 1.8C9 1.8 10.2 3.2 10 4.8C9.8 6.6 7.2 7.4 6.6 9.6" stroke="#000078" stroke-width="2.5" fill="none"/><rect x="5" y="10.4" width="3" height="2.4" fill="#000078"/>
<path d="M8.4 8.2L15.6 14.8M15.4 6.4L8.2 15.2" stroke="#c01818" stroke-width="1.9" fill="none"/></g><g transform="translate(296,51)"><rect x="3" y="1" width="14" height="14.6" fill="#c6c6c6"/><rect x="2.5" y="1.5" width="9" height="8" fill="#fff400" stroke="#000" stroke-width="1.2"/>
<path d="M6.4 5.4L14 11.8M14.2 3.2L6.4 13" stroke="#b01810" stroke-width="2.2" fill="none"/></g><g shape-rendering="crispEdges"><rect x="332.6" y="58.6" width="13.4" height="2.8" fill="#00007c"/><rect x="337.6" y="53.6" width="2.8" height="12.8" fill="#00007c"/><rect x="332" y="58" width="13.4" height="2.8" fill="#0000d4"/><rect x="337" y="53" width="2.8" height="12.8" fill="#0000d4"/><rect x="356.6" y="58.6" width="13.4" height="2.8" fill="#00007c"/><rect x="356" y="58" width="13.4" height="2.8" fill="#0000d4"/></g><g stroke="#0000d4" stroke-width="2.2" fill="none"><path d="M388.4 53v12.6M382 59.3h12.8M383.8 54.7l9.2 9.2M393 54.7l-9.2 9.2"/></g><circle cx="388.4" cy="59.3" r="3.1" fill="#0000d4"/><g shape-rendering="crispEdges"><rect x="407.6" y="58.6" width="12.6" height="2.8" fill="#00007c"/><rect x="407" y="58" width="12.6" height="2.8" fill="#0000d4"/></g><path d="M413 52.8l2.3 2.1-2.3 2.1-2.3-2.1zM413.3 62.4l2.3 2.1-2.3 2.1-2.3-2.1z" fill="#0000d4" stroke="#00007c" stroke-width="0.5"/><path d="M436.3 55l4.7 5 4.9-5M441 59.6V66.8" stroke="#0000d4" stroke-width="2.1" fill="none"/><path d="M430 61.9h6" stroke="#d01010" stroke-width="1.9"/><path d="M435 59.2l3.6 2.7-3.6 2.7z" fill="#d01010"/><g shape-rendering="crispEdges"><g fill="#0000d4"><rect x="457" y="53" width="1" height="5"/><rect x="459" y="53" width="1" height="5"/><rect x="467" y="53" width="1" height="4"/><rect x="464" y="57" width="5" height="1"/><rect x="457" y="61" width="1" height="5"/><rect x="459" y="61" width="1" height="5"/><rect x="467" y="61" width="1" height="4"/><rect x="464" y="65" width="5" height="1"/></g><rect x="456" y="59" width="14" height="1" fill="#000"/><rect x="461" y="55" width="3" height="1" fill="#d01010"/><rect x="462" y="62" width="1" height="3" fill="#d01010"/><rect x="461" y="63" width="3" height="1" fill="#d01010"/></g><ellipse cx="488" cy="59.5" rx="6" ry="4.6" fill="none" stroke="#0000d4" stroke-width="1.9"/><rect x="487" y="52" width="2" height="15" fill="#0000d4" shape-rendering="crispEdges"/><g shape-rendering="crispEdges" fill="#000"><rect x="515" y="51" width="1" height="15"/><rect x="514" y="52" width="3" height="1"/><rect x="514" y="55" width="3" height="1"/><rect x="514" y="58" width="3" height="1"/><rect x="514" y="61" width="3" height="1"/><rect x="514" y="64" width="3" height="1"/><rect x="514" y="64" width="15" height="1"/><rect x="518" y="63" width="1" height="3"/><rect x="521" y="63" width="1" height="3"/><rect x="524" y="63" width="1" height="3"/><rect x="527" y="63" width="1" height="3"/><rect x="540" y="51" width="14" height="14" fill="#fff"/><rect x="542" y="51" width="1" height="14" fill="#808080"/><rect x="545" y="51" width="1" height="14" fill="#808080"/><rect x="548" y="51" width="1" height="14" fill="#808080"/><rect x="551" y="51" width="1" height="14" fill="#808080"/><rect x="540" y="53" width="14" height="1" fill="#808080"/><rect x="540" y="56" width="14" height="1" fill="#808080"/><rect x="540" y="59" width="14" height="1" fill="#808080"/><rect x="540" y="62" width="14" height="1" fill="#808080"/><rect x="539" y="51" width="1" height="16"/><rect x="538" y="53" width="1" height="1"/><rect x="538" y="56" width="1" height="1"/><rect x="538" y="59" width="1" height="1"/><rect x="538" y="62" width="1" height="1"/><rect x="538" y="65" width="1" height="1"/><rect x="538" y="65" width="16" height="1"/><rect x="539" y="66" width="1" height="1"/><rect x="542" y="66" width="1" height="1"/><rect x="545" y="66" width="1" height="1"/><rect x="548" y="66" width="1" height="1"/><rect x="551" y="66" width="1" height="1"/><rect x="564" y="52" width="1" height="15"/><rect x="563" y="53" width="1" height="1"/><rect x="563" y="56" width="1" height="1"/><rect x="563" y="59" width="1" height="1"/><rect x="563" y="62" width="1" height="1"/><rect x="563" y="65" width="1" height="1"/><rect x="563" y="65" width="15" height="1"/><rect x="564" y="66" width="1" height="1"/><rect x="567" y="66" width="1" height="1"/><rect x="570" y="66" width="1" height="1"/><rect x="573" y="66" width="1" height="1"/><rect x="576" y="66" width="1" height="1"/><rect x="565" y="53" width="13" height="1" fill="#000080"/><rect x="567" y="52" width="1" height="3" fill="#400080"/><rect x="570" y="52" width="1" height="3" fill="#400080"/><rect x="573" y="52" width="1" height="3" fill="#400080"/><rect x="576" y="52" width="1" height="3" fill="#400080"/><rect x="589" y="52" width="1" height="15"/><rect x="588" y="53" width="1" height="1"/><rect x="588" y="56" width="1" height="1"/><rect x="588" y="59" width="1" height="1"/><rect x="588" y="62" width="1" height="1"/><rect x="588" y="65" width="1" height="1"/><rect x="588" y="65" width="15" height="1"/><rect x="589" y="66" width="1" height="1"/><rect x="592" y="66" width="1" height="1"/><rect x="595" y="66" width="1" height="1"/><rect x="598" y="66" width="1" height="1"/><rect x="601" y="66" width="1" height="1"/></g><path d="M590 60.5l3.6-3.4v2.2h6.8v-2.2l3.6 3.4-3.6 3.4v-2.2h-6.8v2.2z" fill="#f00000"/><g shape-rendering="crispEdges"><rect x="613" y="51" width="2" height="2" fill="#700000"/><rect x="616" y="51" width="2" height="2" fill="#800000"/><rect x="619" y="51" width="2" height="2" fill="#700000"/><rect x="622" y="51" width="2" height="2" fill="#900000"/><rect x="613" y="54" width="2" height="2" fill="#800000"/><rect x="616" y="54" width="2" height="2" fill="#e00000"/><rect x="619" y="54" width="2" height="2" fill="#800000"/><rect x="613" y="57" width="2" height="2" fill="#700000"/><rect x="616" y="57" width="2" height="2" fill="#800000"/><rect x="613" y="60" width="2" height="2" fill="#900000"/><rect x="626" y="56" width="2" height="11" fill="#e00000"/><rect x="623" y="59" width="2" height="8" fill="#a01010"/><rect x="620" y="62" width="2" height="5" fill="#e00000"/><rect x="617" y="65" width="2" height="2" fill="#700000"/></g><path d="M613.8 66.2L628 52" stroke="#0000a0" stroke-width="2.3" fill="none"/><path d="M639 56l4.2 3.5-4.2 3.5z" fill="#000"/><path d="M640.6 66L643.6 65.4C646 64 647 60.4 647.9 57.6C648.5 55.9 648.9 55.7 649.6 55.7C650.4 55.7 650.8 56.2 651 58C651.4 61.6 652 64.6 653.8 66" stroke="#f00000" stroke-width="2.7" fill="none" stroke-linejoin="round"/><path d="M640.4 66.8h4M651.6 66.8h2.6" stroke="#a00000" stroke-width="0.8"/><path d="M664 56l4.2 3.5-4.2 3.5z" fill="#000"/><path d="M664 66.4h2.6L670 61.8 672.8 55.4 674.2 54.4" stroke="#c81010" stroke-width="1.1" fill="none"/><path d="M674.2 54.4L675.6 56.2 676 64 678 66.6" stroke="#801010" stroke-width="1.1" fill="none"/><path d="M689 56l4.2 3.5-4.2 3.5z" fill="#000"/><g shape-rendering="crispEdges"><rect x="695" y="53" width="9" height="14" fill="#fff"/><rect x="695" y="63" width="9" height="4" fill="#d0ffff"/><rect x="695" y="57" width="9" height="2" fill="#ffffe0"/><rect x="695" y="53" width="9" height="1" fill="#000"/><rect x="695" y="56" width="9" height="1" fill="#a03030"/><rect x="695" y="59" width="9" height="1" fill="#50c050"/><rect x="695" y="62" width="9" height="1" fill="#000080"/><rect x="695" y="65" width="9" height="1" fill="#80e0e0"/><rect x="713" y="56" width="1" height="11" fill="#000"/><rect x="713" y="66" width="15" height="1" fill="#000"/><rect x="714" y="57" width="1" height="1" fill="#000"/><rect x="714" y="59" width="1" height="1" fill="#000"/><rect x="714" y="61" width="1" height="1" fill="#000"/><rect x="714" y="63" width="1" height="1" fill="#000"/><rect x="716" y="65" width="1" height="1" fill="#000"/><rect x="719" y="65" width="1" height="1" fill="#000"/><rect x="722" y="65" width="1" height="1" fill="#000"/><rect x="725" y="65" width="1" height="1" fill="#000"/></g><path d="M715.5 65.5L719 58.5M721 58.5L725.5 65.5" stroke="#b01010" stroke-width="1.2" fill="none"/><circle cx="720" cy="56.6" r="3.3" fill="#48e0e8" stroke="#000" stroke-width="1.1"/><path d="M718.2 56.6l1.8-1.4 2 1.6" stroke="#903030" stroke-width="0.9" fill="none"/><path d="M722.8 54.2L727 51" stroke="#801010" stroke-width="1.9"/></svg>
</div>
<div class="panel"></div>
<svg class="plot" width="1280" height="886" viewBox="0 75 1280 886">
<g stroke="#b9b9b9" stroke-width="1" stroke-dasharray="3 3" shape-rendering="crispEdges"><line x1="177.5" y1="900" x2="177.5" y2="95"/><line x1="264.5" y1="900" x2="264.5" y2="95"/><line x1="351.5" y1="900" x2="351.5" y2="95"/><line x1="438.5" y1="900" x2="438.5" y2="95"/><line x1="525.5" y1="900" x2="525.5" y2="95"/><line x1="612.5" y1="900" x2="612.5" y2="95"/><line x1="698.5" y1="900" x2="698.5" y2="95"/><line x1="785.5" y1="900" x2="785.5" y2="95"/><line x1="872.5" y1="900" x2="872.5" y2="95"/><line x1="959.5" y1="900" x2="959.5" y2="95"/><line x1="1046.5" y1="900" x2="1046.5" y2="95"/><line x1="1133.5" y1="900" x2="1133.5" y2="95"/><line x1="1220.5" y1="900" x2="1220.5" y2="95"/><line x1="91" y1="842.5" x2="1220" y2="842.5"/><line x1="91" y1="785.5" x2="1220" y2="785.5"/><line x1="91" y1="727.5" x2="1220" y2="727.5"/><line x1="91" y1="670.5" x2="1220" y2="670.5"/><line x1="91" y1="612.5" x2="1220" y2="612.5"/><line x1="91" y1="555.5" x2="1220" y2="555.5"/><line x1="91" y1="497.5" x2="1220" y2="497.5"/><line x1="91" y1="439.5" x2="1220" y2="439.5"/><line x1="91" y1="382.5" x2="1220" y2="382.5"/><line x1="91" y1="324.5" x2="1220" y2="324.5"/><line x1="91" y1="267.5" x2="1220" y2="267.5"/><line x1="91" y1="209.5" x2="1220" y2="209.5"/><line x1="91" y1="152.5" x2="1220" y2="152.5"/><line x1="91" y1="94.5" x2="1220" y2="94.5"/></g>
<g fill="#000" shape-rendering="crispEdges">
<rect x="89" y="93" width="2" height="808"/>
<rect x="89" y="899" width="1132" height="2"/>
<rect x="89" y="900" width="2" height="8"/>
<rect x="176" y="900" width="2" height="8"/>
<rect x="263" y="900" width="2" height="8"/>
<rect x="350" y="900" width="2" height="8"/>
<rect x="437" y="900" width="2" height="8"/>
<rect x="524" y="900" width="2" height="8"/>
<rect x="611" y="900" width="2" height="8"/>
<rect x="697" y="900" width="2" height="8"/>
<rect x="784" y="900" width="2" height="8"/>
<rect x="871" y="900" width="2" height="8"/>
<rect x="958" y="900" width="2" height="8"/>
<rect x="1045" y="900" width="2" height="8"/>
<rect x="1132" y="900" width="2" height="8"/>
<rect x="1219" y="900" width="2" height="8"/>
<rect x="82" y="899" width="8" height="2"/>
<rect x="82" y="841" width="8" height="2"/>
<rect x="82" y="784" width="8" height="2"/>
<rect x="82" y="726" width="8" height="2"/>
<rect x="82" y="669" width="8" height="2"/>
<rect x="82" y="611" width="8" height="2"/>
<rect x="82" y="554" width="8" height="2"/>
<rect x="82" y="496" width="8" height="2"/>
<rect x="82" y="438" width="8" height="2"/>
<rect x="82" y="381" width="8" height="2"/>
<rect x="82" y="323" width="8" height="2"/>
<rect x="82" y="266" width="8" height="2"/>
<rect x="82" y="208" width="8" height="2"/>
<rect x="82" y="151" width="8" height="2"/>
<rect x="82" y="93" width="8" height="2"/>
</g>
<g font-family="Liberation Sans, Arial, sans-serif" font-size="13px" fill="#000">
<text x="90" y="924" text-anchor="middle">-200</text>
<text x="177" y="924" text-anchor="middle">0</text>
<text x="264" y="924" text-anchor="middle">200</text>
<text x="351" y="924" text-anchor="middle">400</text>
<text x="438" y="924" text-anchor="middle">600</text>
<text x="525" y="924" text-anchor="middle">800</text>
<text x="612" y="924" text-anchor="middle">1000</text>
<text x="698" y="924" text-anchor="middle">1200</text>
<text x="785" y="924" text-anchor="middle">1400</text>
<text x="872" y="924" text-anchor="middle">1600</text>
<text x="959" y="924" text-anchor="middle">1800</text>
<text x="1046" y="924" text-anchor="middle">2000</text>
<text x="1133" y="924" text-anchor="middle">2200</text>
<text x="1220" y="924" text-anchor="middle">2400</text>
<text x="79" y="904.8" text-anchor="end">-600</text>
<text x="79" y="846.8" text-anchor="end">-300</text>
<text x="79" y="789.8" text-anchor="end">0</text>
<text x="79" y="731.8" text-anchor="end">300</text>
<text x="79" y="674.8" text-anchor="end">600</text>
<text x="79" y="616.8" text-anchor="end">900</text>
<text x="79" y="559.8" text-anchor="end">1200</text>
<text x="79" y="501.8" text-anchor="end">1500</text>
<text x="79" y="443.8" text-anchor="end">1800</text>
<text x="79" y="386.8" text-anchor="end">2100</text>
<text x="79" y="328.8" text-anchor="end">2400</text>
<text x="79" y="271.8" text-anchor="end">2700</text>
<text x="79" y="213.8" text-anchor="end">3000</text>
<text x="79" y="156.8" text-anchor="end">3300</text>
<text x="79" y="98.8" text-anchor="end">3600</text>
<text x="654.5" y="949" text-anchor="middle">Wavelength [nm]</text>
<text transform="translate(36,497) rotate(-90)" text-anchor="middle">Intensity</text>
</g>
<rect x="143.5" y="137.5" width="162" height="29" fill="none" stroke="#000" stroke-width="1" shape-rendering="crispEdges"/>
<rect x="150" y="151" width="25" height="1" fill="#000" shape-rendering="crispEdges"/>
<text x="180" y="156.5" font-family="Liberation Sans, Arial, sans-serif" font-size="13px" fill="#000">Forsterit Raman 532</text>
<g fill="none" stroke="#000" stroke-width="1" shape-rendering="crispEdges"><polyline points="248.5,766.5 252,765.5 256,766.5 260,765.5 265.5,765 272.5,757 276,755.5 280,757.5 285,762.5 289.5,765.5 293,765.5 298,763 301.5,760.5 302.5,757.5 306.5,744.5 309,739.5 312,742.5 314.5,748 319.5,753 325,758 329.5,761 333,762.5 340,762.5 347,764.5 351.5,762.5 354.5,759.5 359,754 363,746.5 366,744 369.5,748 371.5,754.5 374.5,759.5 377,761.5 380.5,763.5 397.5,763.5 405.5,760.5 409.5,757.5 412.5,753.5 415,754.5 420.5,754.5 423,751.5 427,742.5 428,734 432,722.5 434,720 436.5,719 437.5,717.5 439.5,715.5 442,717 444,726.5 447,739.5 448,745 450,749.5 455,757 459.5,759.5 471.5,759.5 484,757 496.5,754 504,751 510,748 515,740 519,727 521,715 523.5,701 525,688 525.5,672"/><path d="M526.5 655V672M527.5 638V655M528.5 615V638M529.5 586V615M530.5 512V586M531.5 468V512M532.5 425V468M533.5 386V425M534.5 351V386M535.5 322V351M536.5 320V325M537.5 324V340M538.5 340V363M539.5 363V386M540.5 386V407M541.5 407V423M542.5 406V419M543.5 379V406M544.5 341V379M545.5 296V341M546.5 199V296M547.5 163V199M548.5 137V163M549.5 127V137M550.5 130V148M551.5 148V236M552.5 236V300M553.5 300V364M554.5 364V423M555.5 423V474M556.5 474V546M557.5 546V570M558.5 570V586M559.5 586V598M560.5 598V610M561.5 610V633M562.5 633V647M563.5 647V662M564.5 662V672"/><polyline points="564.5,672 566,688 567,701 568,712 569.5,719 572,721.5 575,715.5 577.5,710.5 580.5,716.5 583,721.5 585.5,719 587,715 589.5,701 591.5,687 593,669 594.5,663.5 596,662.5 597.5,664.5 598.5,675.5 600,690.5 602,707 603.5,726 606,734.5 608.5,742 611.5,746 615,748 619,749.5 625,750 637,751.5 645,752.5 650,751.5 658,751 662,751.5 665.5,750.5 680,750.5 700,750 706,749.5 712.5,748.5 718,749.5 725,750.5 751,750.5 757,749.5 762.5,747.5 767.5,748.5 790,748.5 792.5,747.5 805,747 820,745.5 852.5,745.5 872.5,745 882.5,744.5 907.5,744 910,743.5 937.5,743 947.5,742.5 960,742.5 985,741.5 1005,741 1035,739.5 1070,739 1092.5,738 1130,737 1160,735.5 1185,734.5 1220,734.5"/></g>
</svg>
<div class="status"><span style="left:33px;letter-spacing:-0.12px">1 Spectrum</span><i style="left:119px"></i><i style="left:447px"></i><i style="left:1278px"></i><span style="left:452px;letter-spacing:-0.25px">Position: </span><span style="left:496px">1350,8 </span><span style="left:534px">| </span><span style="left:543px">1505</span></div>
</body></html>
